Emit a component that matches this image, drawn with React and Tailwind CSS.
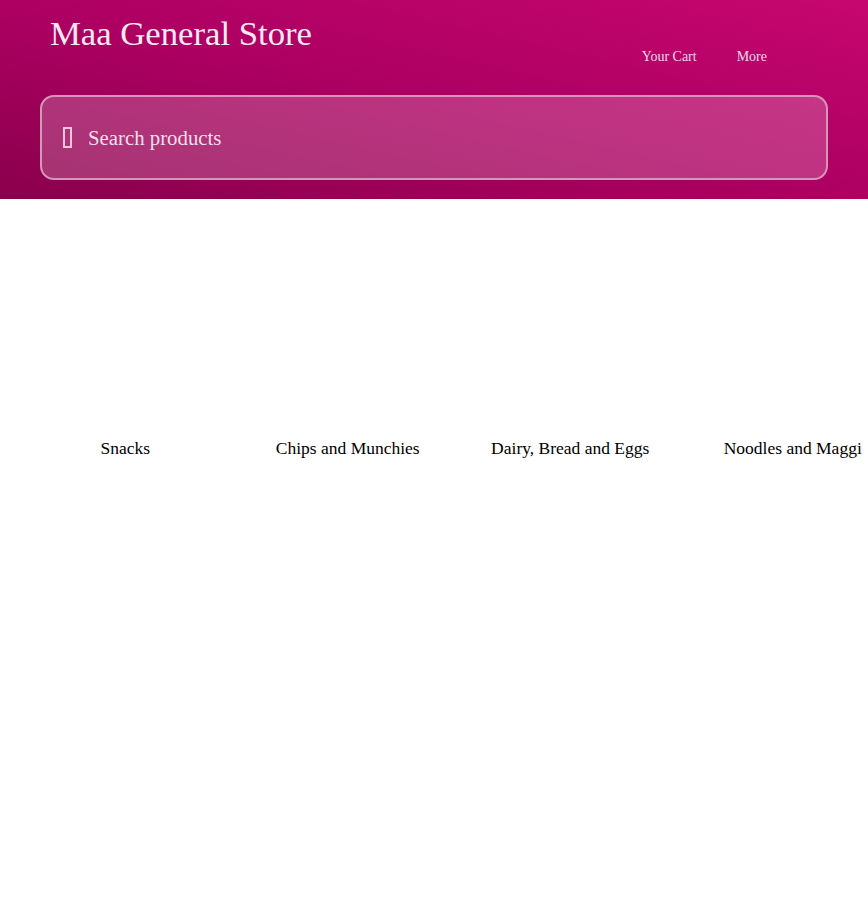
import React from 'react';

const categories = ['Snacks', 'Chips and Munchies', 'Dairy, Bread and Eggs', 'Noodles and Maggi'];

export default function App() {
  return (
    <div className="min-h-[900px] bg-white font-['Liberation_Serif',serif] overflow-hidden">
      {/* Header */}
      <header className="h-[199px] bg-gradient-to-tr from-[#8a004c] via-[#ad0062] to-[#c6076f] px-10 pt-[14px]">
        <div className="flex items-start justify-between">
          <h1 className="pl-[10px] text-[34.7px] leading-[40px] text-[#fbeaf2]">Maa General Store</h1>
          <nav className="flex gap-10 pt-[35px] pr-[61px] text-[14px] leading-[16px] text-[#f6d8e7]">
            <span>Your Cart</span>
            <span>More</span>
          </nav>
        </div>
        <div className="mt-[30px] flex h-[85px] items-center gap-4 rounded-[14px] border-2 border-[#d796b9] bg-white/20 pl-[21px]">
          <span className="inline-block h-[21px] w-[9px] border-2 border-[#f1c6dc]" />
          <span className="text-[20.8px] text-[#f7dfeb]">Search products</span>
        </div>
      </header>

      {/* Categories */}
      <div className="flex pl-[14px] pt-[237px]">
        {categories.map((c) => (
          <div key={c} className="w-[222.5px] shrink-0 text-center text-[17.5px] leading-[24px] text-black whitespace-nowrap">
            {c}
          </div>
        ))}
      </div>
    </div>
  );
}
